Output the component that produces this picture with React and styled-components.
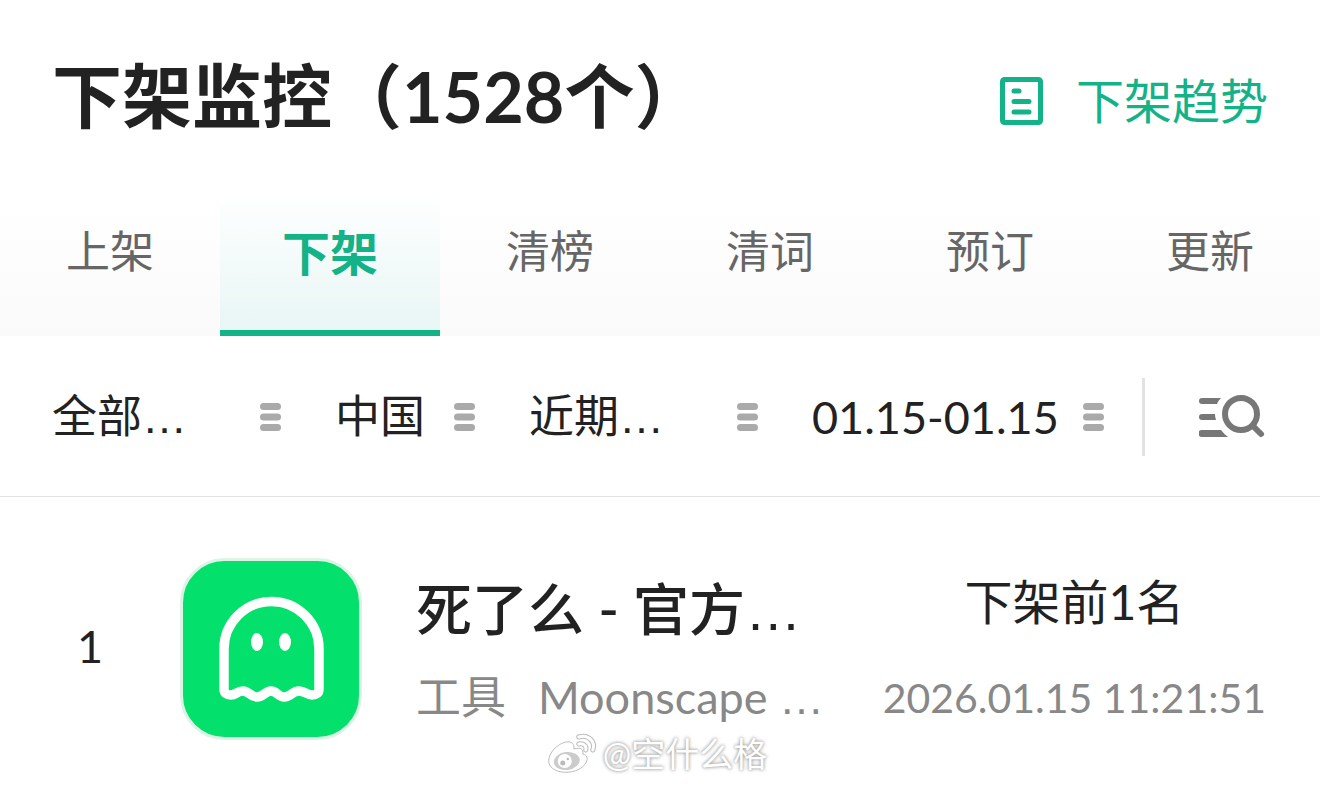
import React from "react";
import styled, { createGlobalStyle } from "styled-components";

const GREEN = "#13b287";

const GlobalStyle = createGlobalStyle`
  * { box-sizing: border-box; }
  body {
    margin: 0;
    background: #fff;
    color: #222;
    font-family: Lato, "Noto Sans CJK SC", sans-serif;
  }
  h1, h2, p, ol { margin: 0; padding: 0; }
  button, select { font-family: inherit; color: inherit; background: none; border: 0; padding: 0; margin: 0; cursor: pointer; }
`;

const Header = styled.header`
  display: flex;
  align-items: center;
  justify-content: space-between;
  height: 190px;
  padding: 12px 52px 0 52px;
`;

const Title = styled.h1`
  font-size: 70px;
  font-weight: 700;
  line-height: 100px;
  padding-bottom: 10px;
  white-space: nowrap;
`;

const TrendLink = styled.a`
  display: flex;
  align-items: center;
  gap: 32px;
  color: ${GREEN};
  font-size: 48px;
  line-height: 72px;
  text-decoration: none;
  white-space: nowrap;
`;

const Tabs = styled.nav`
  display: flex;
  height: 146px;
  background: linear-gradient(#fff, #fafafa);
`;

const Tab = styled.button`
  flex: 1;
  padding-bottom: ${(p) => (p.$active ? "20px" : "28px")};
  font-size: ${(p) => (p.$active ? "48px" : "44px")};
  font-weight: ${(p) => (p.$active ? 700 : 400)};
  color: ${(p) => (p.$active ? GREEN : "#666")};
  background: ${(p) => (p.$active ? "linear-gradient(#fff, #e8f6f5)" : "none")};
  border-bottom: ${(p) => (p.$active ? `6px solid ${GREEN}` : "0")};
`;

const FilterBar = styled.div`
  display: flex;
  align-items: center;
  justify-content: space-between;
  height: 161px;
  padding: 2px 54px 0 52px;
  border-bottom: 1px solid #e2e2e2;
`;

const FilterGroup = styled.div`
  display: flex;
  align-items: center;
  gap: 54px;
`;

const Filter = styled.label`
  display: flex;
  align-items: center;
  justify-content: space-between;
  width: ${(p) => p.$width};
`;

const Select = styled.select`
  appearance: none;
  padding-top: 2px;
  font-family: "Liberation Sans", "Noto Sans CJK SC", sans-serif;
  font-size: 45px;
  line-height: 68px;
  outline: 0;
`;

const DateButton = styled.button`
  display: flex;
  align-items: center;
  gap: 24px;
  font-size: 45px;
  line-height: 68px;
  white-space: nowrap;
`;

const Divider = styled.span`
  width: 3px;
  height: 78px;
  background: #e2e2e2;
`;

const SearchButton = styled.button`
  display: flex;
`;

const List = styled.ol`
  list-style: none;
`;

const Item = styled.li`
  position: relative;
  display: flex;
  align-items: center;
  padding: 61px 54px 45px 0;
`;

const Rank = styled.span`
  width: 180px;
  padding-bottom: 6px;
  text-align: center;
  font-size: 45px;
  line-height: 68px;
`;

const Info = styled.div`
  flex: 1;
  min-width: 0;
  padding-left: 54px;
`;

const Name = styled.h2`
  font-size: 56px;
  font-weight: 500;
  line-height: 84px;
  padding-top: 2px;
  white-space: nowrap;
`;

const Meta = styled.p`
  display: flex;
  gap: 32px;
  padding-top: 10px;
  font-size: 45px;
  line-height: 68px;
  color: #888;
  white-space: nowrap;
`;

const Dots = styled.span`
  font-family: "Liberation Sans", sans-serif;
`;

const Status = styled.div`
  display: flex;
  flex-direction: column;
  align-items: center;
  gap: 26px;
  white-space: nowrap;
`;

const StatusText = styled.p`
  font-size: 48px;
  line-height: 72px;
`;

const StatusTime = styled.time`
  font-size: 41px;
  line-height: 68px;
  color: #888;
`;

const Watermark = styled.div`
  position: absolute;
  left: 50%;
  bottom: 6px;
  transform: translateX(-50%);
  display: flex;
  align-items: center;
  gap: 6px;
  padding-right: 6px;
  font-size: 34px;
  line-height: 50px;
  color: #fff;
  text-shadow: 0 0 3px #999, 0 0 4px #bbb;
  white-space: nowrap;
`;

const TrendIcon = () => (
  <svg width="44" height="50" viewBox="0 0 44 50" fill="none" stroke={GREEN} strokeWidth="5" aria-hidden="true">
    <rect x="2.5" y="3.5" width="38" height="43" rx="2" />
    <path d="M14 15h5M14 25.500h15M14 36h15" strokeLinecap="round" />
  </svg>
);

const MenuIcon = () => (
  <svg width="21" height="28" viewBox="0 0 21 28" fill="#aaa" aria-hidden="true">
    <rect width="21" height="7" rx="3.5" />
    <rect y="10.500" width="21" height="7" rx="3.5" />
    <rect y="21" width="21" height="7" rx="3.5" />
  </svg>
);

const SearchIcon = () => (
  <svg width="67" height="44" viewBox="0 0 67 44" fill="#777" aria-hidden="true">
    <path d="M3 3h19q-3 3-4 6H3a3 3 0 0 1 0-6zM3 19h13q0 3 1 6H3a3 3 0 0 1 0-6zM3 35h19q3 4 7 7H3a3.500 3.500 0 0 1 0-7z" />
    <circle cx="42" cy="19" r="16" fill="none" stroke="#777" strokeWidth="6" />
    <path d="M54 31l8 8" stroke="#777" strokeWidth="6" strokeLinecap="round" />
  </svg>
);

const AppIcon = () => (
  <svg width="182" height="182" viewBox="0 0 182 182" role="img" aria-label="死了么">
    <rect x="1.500" y="1.500" width="179" height="179" rx="43" fill="#04e06c" stroke="#dcf3e5" strokeWidth="3" />
    <path
      d="M44 91a47.500 47.500 0 0 1 95 0V131Q139 137 132 137C127 137 125 133 119 133C112 133 111 139 104 139C98 139 97 133 91 133C85 133 84 139 77 139C70 139 69 133 63 133C57 133 56 137 51 137Q44 137 44 131Z"
      fill="none" stroke="#fff" strokeWidth="9.500" strokeLinejoin="round"
    />
    <ellipse cx="77" cy="84" rx="6" ry="9" fill="#fff" />
    <ellipse cx="105" cy="84" rx="6" ry="9" fill="#fff" />
  </svg>
);

const WeiboIcon = () => (
  <svg width="50" height="42" viewBox="0 0 50 42" aria-hidden="true">
    <path
      d="M19 9C7 12-1 25 3 32C8 42 32 42 39 30C42 25 40 22 36 21C37 16 34 14 27 16C28 11 25 8 19 9Z"
      fill="#fff" stroke="#bbb" strokeWidth="1"
    />
    <ellipse cx="20" cy="28" rx="13" ry="9" transform="rotate(-8 20 28)" fill="#ccc" />
    <circle cx="18" cy="28" r="7" fill="#fff" />
    <circle cx="16" cy="30" r="2.500" fill="#bbb" />
    <circle cx="21" cy="26" r="1.200" fill="#bbb" />
    <g fill="none" strokeLinecap="round">
      <path d="M32 4C42 1 49 9 46 17M32 11C37 10 40 13 39 17" stroke="#bbb" strokeWidth="5" />
      <path d="M32 4C42 1 49 9 46 17M32 11C37 10 40 13 39 17" stroke="#fff" strokeWidth="3" />
    </g>
  </svg>
);

const tabs = ["上架", "下架", "清榜", "清词", "预订", "更新"];
const filters = [
  { name: "分类", value: "全部…", width: "229px" },
  { name: "地区", value: "中国", width: "140px" },
  { name: "时间", value: "近期…", width: "229px" },
];

export default function App() {
  return (
    <main>
      <GlobalStyle />
      <Header>
        <Title>下架监控（1528个）</Title>
        <TrendLink href="#trend">
          <TrendIcon />
          下架趋势
        </TrendLink>
      </Header>
      <Tabs>
        {tabs.map((t) => (
          <Tab key={t} type="button" $active={t === "下架"}>{t}</Tab>
        ))}
      </Tabs>
      <FilterBar>
        <FilterGroup>
          {filters.map((f) => (
            <Filter key={f.name} $width={f.width}>
              <Select aria-label={f.name}>
                <option>{f.value}</option>
              </Select>
              <MenuIcon />
            </Filter>
          ))}
          <DateButton type="button">
            01.15-01.15
            <MenuIcon />
          </DateButton>
        </FilterGroup>
        <FilterGroup>
          <Divider />
          <SearchButton type="button" aria-label="搜索">
            <SearchIcon />
          </SearchButton>
        </FilterGroup>
      </FilterBar>
      <List>
        <Item>
          <Rank>1</Rank>
          <AppIcon />
          <Info>
            <Name>死了么 - 官方<Dots>…</Dots></Name>
            <Meta>
              <span>工具</span>
              <span>Moonscape <Dots>…</Dots></span>
            </Meta>
          </Info>
          <Status>
            <StatusText>下架前1名</StatusText>
            <StatusTime>2026.01.15 11:21:51</StatusTime>
          </Status>
          <Watermark>
            <WeiboIcon />
            @空什么格
          </Watermark>
        </Item>
      </List>
    </main>
  );
}
